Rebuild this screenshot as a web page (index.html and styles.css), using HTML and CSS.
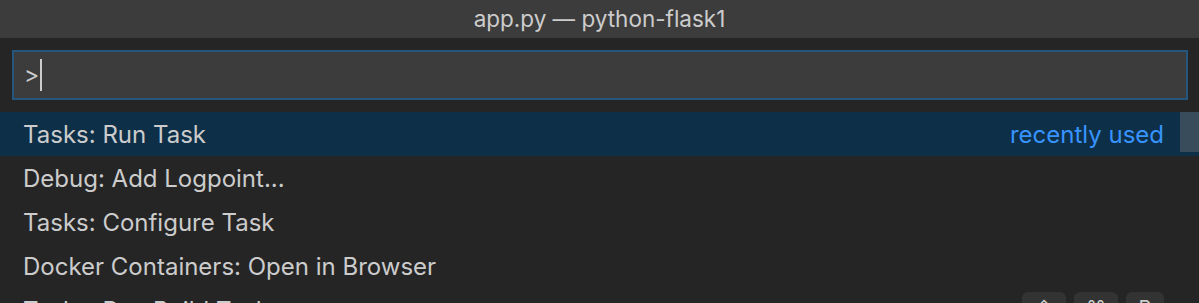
FILE: index.html
```html
<!DOCTYPE html>
<html lang="en">
  <head>
    <meta charset="UTF-8" />
    <title>app.py — python-flask1</title>
    <link rel="stylesheet" href="styles.css">
  </head>
  <body>
    <div class="titlebar">app.py — python-flask1</div>
    <div class="quick-input">
      <div class="input-box">
        <span class="prompt">&gt;</span><span class="caret"></span>
      </div>
    </div>
    <div class="list">
      <div class="row selected">
        <span class="label">Tasks: Run Task</span>
        <span class="hint">recently used</span>
      </div>
      <div class="row">
        <span class="label">Debug: Add Logpoint...</span>
      </div>
      <div class="row">
        <span class="label">Tasks: Configure Task</span>
      </div>
      <div class="row">
        <span class="label">Docker Containers: Open in Browser</span>
      </div>
      <div class="row">
        <span class="label">Tasks: Run Build Task</span>
        <span class="keys">
          <span class="key">⇧</span>
          <span class="key">⌘</span>
          <span class="key small">B</span>
        </span>
      </div>
      <div class="scrollbar"></div>
    </div>
  </body>
</html>
```

FILE: styles.css
```css
* {
  margin: 0;
  padding: 0;
  box-sizing: border-box;
}

body {
  width: 1199px;
  height: 303px;
  overflow: hidden;
  background: #252526;
  color: #cccccc;
  font-family: "Inter", "Roboto", sans-serif;
}

.titlebar {
  height: 38px;
  background: #3c3c3c;
  display: flex;
  align-items: center;
  justify-content: center;
  font-size: 22.5px;
  color: #cccccc;
  padding-bottom: 1px;
}

.quick-input {
  padding: 12px 11px 12px 12px;
}

.input-box {
  height: 50px;
  background: #3c3c3c;
  border: 2px solid #245780;
  display: flex;
  align-items: center;
  padding-left: 10px;
  font-size: 23px;
}

.caret {
  display: inline-block;
  width: 2px;
  height: 32px;
  background: #cccccc;
  margin-left: 1px;
}

.list {
  position: relative;
}

.row {
  height: 44px;
  display: flex;
  align-items: center;
  justify-content: space-between;
  padding: 0 35px 0 23px;
  font-size: 24px;
}

.row.selected {
  background: #0e2f48;
}

.hint {
  color: #3794ff;
}

.keys {
  display: flex;
  gap: 8px;
  align-self: flex-start;
  margin-top: 4px;
}

.key {
  width: 44px;
  height: 34px;
  background: #333333;
  border-radius: 6px;
  font-size: 20px;
  display: flex;
  justify-content: center;
  padding-top: 4px;
}

.key.small {
  width: 38px;
}

.scrollbar {
  position: absolute;
  top: 0;
  right: 0;
  width: 19px;
  height: 40px;
  background: rgba(121, 121, 121, 0.4);
}
```
